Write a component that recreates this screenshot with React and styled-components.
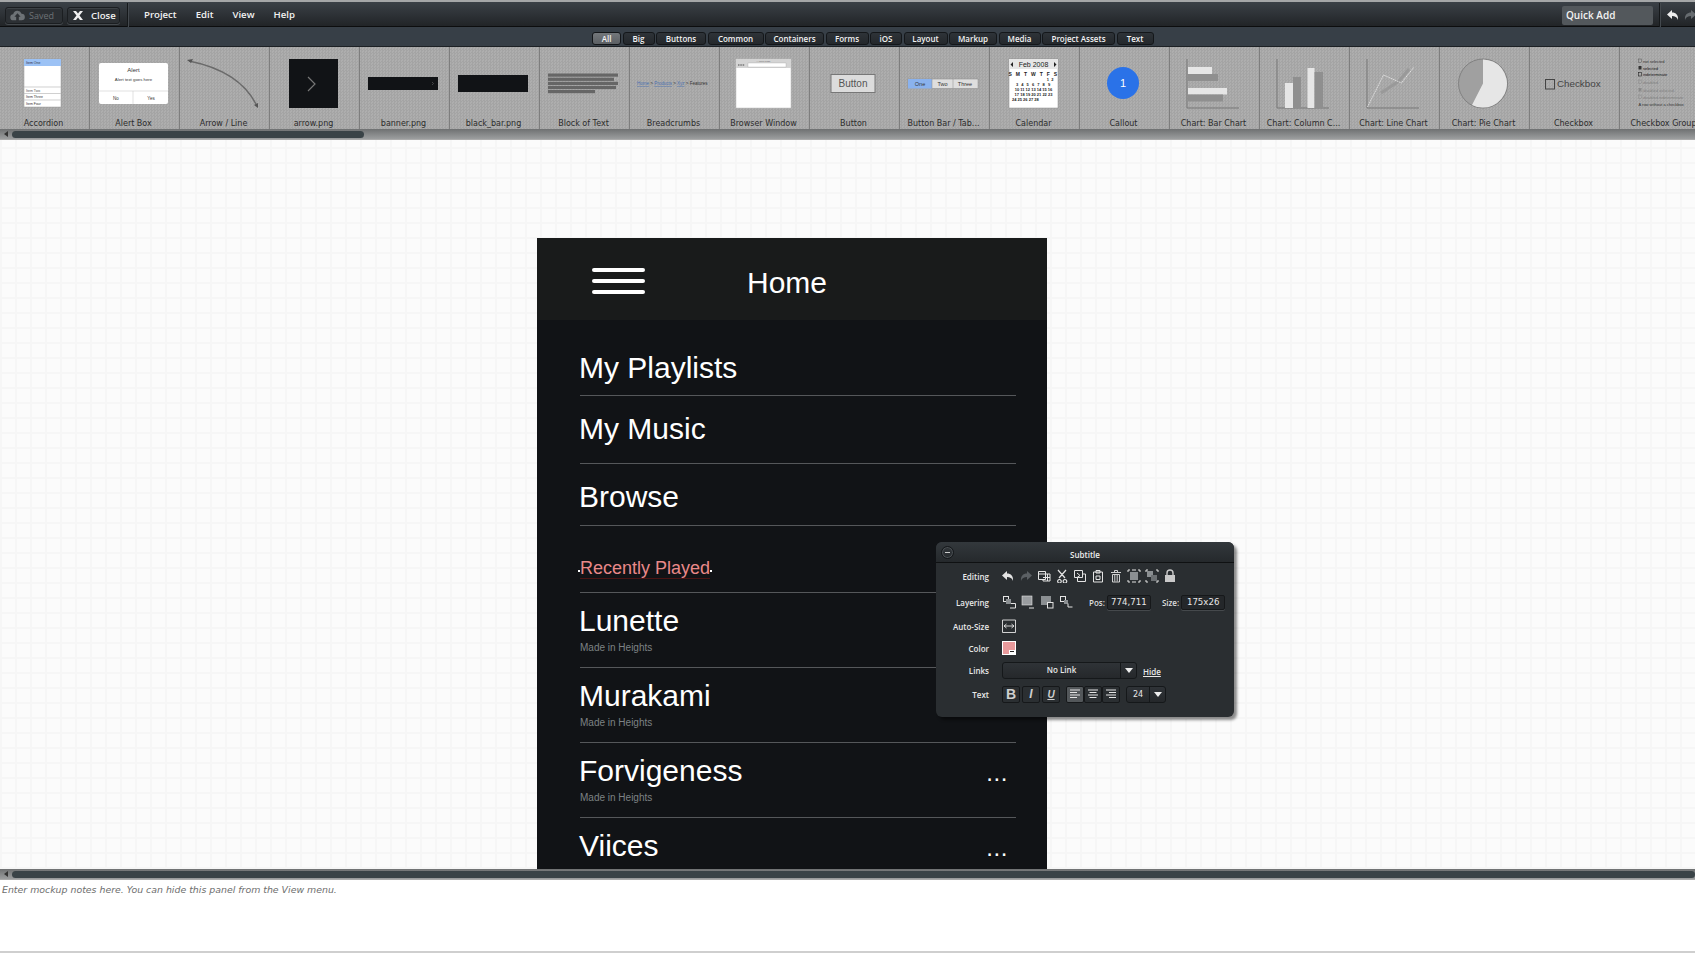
import React from "react";
import styled, { createGlobalStyle } from "styled-components";

const Global = createGlobalStyle`
  html, body { margin: 0; padding: 0; background: #fff; overflow: hidden; }
  * { box-sizing: border-box; }
`;

const UI = `"Open Sans", "Liberation Sans", sans-serif`;
const SANS = `"Liberation Sans", Arial, sans-serif`;
const DEJA = `"DejaVu Sans", sans-serif`;

const Shell = styled.div`
  width: 1695px; height: 953px; display: flex; flex-direction: column; overflow: hidden;
  font-family: ${UI};
`;
const TopBar = styled.header`
  height: 27px; flex: none; display: flex; align-items: center; padding: 2px 0 0 5px;
  background: linear-gradient(#3b4147, #212427);
  border-top: 2px solid #a5a7a8; border-bottom: 1px solid #0c0d0e;
  color: #eee;
`;
const BarButton = styled.button`
  width: ${p => p.$w}px; height: 17px; margin-right: 4px; padding: 0 0 0 4px; display: flex; align-items: center;
  gap: ${p => (p.$dim ? 4 : 7)}px;
  border: 1px solid #1b1e21; border-radius: 3px; background: #2c3034;
  box-shadow: inset 0 1px 0 #3d4246, 0 1px 0 #44494d;
  font: ${p => (p.$dim ? "400 9px" : "600 9.6px")} ${UI}; color: ${p => (p.$dim ? "#6d7276" : "#f0f0f0")};
`;
const BarDivider = styled.span`
  width: 1px; height: 24px; margin: 0 ${p => p.$after}px 0 ${p => p.$before}px; background: #44494e; box-shadow: -1px 0 0 #15181a;
`;
const Nav = styled.nav`
  display: flex; gap: 19px; font: 600 9.6px ${UI}; color: #f2f2f2; margin-top: -2px;
`;
const QuickAdd = styled.div`
  margin-left: auto; width: 91px; height: 19px; padding-left: 4px; display: flex; align-items: center;
  background: #53585c; border-radius: 2px; font: 600 10px ${UI}; color: #f2f2f2;
`;
const UndoPair = styled.div`
  display: flex; gap: 3px; margin-right: -2px; align-items: center;
`;
const FilterBar = styled.div`
  height: 20px; flex: none; display: flex; align-items: center; gap: 1.5px; padding: 3px 0 0 592px;
  background: #373f47; border-bottom: 1px solid #1d2125;
`;
const Tab = styled.div`
  width: ${p => p.$w}px; height: 13px; display: flex; align-items: center; justify-content: center;
  border: 1px solid #14171a; border-radius: 3px;
  background: ${p => (p.$active ? "linear-gradient(#73777b, #5c6064)" : "linear-gradient(#2e3338, #24282c)")};
  font: 600 8px ${UI}; color: #f2f2f2;
`;
const Library = styled.div`
  height: 82px; flex: none; display: flex; overflow: hidden;
  background-color: #a9a9a9;
  background-image: conic-gradient(#a4a4a4 25%, #aeaeae 0 50%, #a4a4a4 0 75%, #aeaeae 0);
  background-size: 3px 3px;
`;
const Item = styled.div`
  width: 90px; flex: none; display: flex; flex-direction: column; border-right: 1px solid #7e7e7e;
`;
const Thumb = styled.svg`
  width: 89px; height: 70px; display: block; font-family: ${SANS};
`;
const ItemLabel = styled.div`
  height: 11px; margin-top: 1px; padding-right: 2px; text-align: center; white-space: nowrap;
  font: 8px/12px ${DEJA}; color: #2c2c2c;
`;
const ScrollTrack = styled.div`
  height: ${p => p.$h}px; flex: none; display: flex; align-items: center; padding-left: 4px; gap: 4px;
  background: linear-gradient(#6f7172, #9c9e9f);
  border-bottom: 1px solid #aaa;
`;
const ScrollArrow = styled.span`
  width: 0; height: 0; border: 3px solid transparent; border-left: 0; border-right: 4px solid #333;
`;
const ScrollThumb = styled.span`
  width: ${p => p.$w}px; height: 7px; border-radius: 4px; background: #3a4347;
`;
const Canvas = styled.main`
  flex: 1; min-height: 0; position: relative; overflow: hidden; padding: 98px 0 0 537px;
  background-color: #fbfbfb;
  background-image:
    linear-gradient(90deg, #f6f6f6 2px, transparent 2px),
    linear-gradient(#f6f6f6 2px, transparent 2px);
  background-size: 15px 15px;
  background-position: 0 7px;
`;
const Phone = styled.section`
  width: 510px; height: 100%; overflow: hidden; background: #111316; color: #fff; font-family: ${SANS};
`;
const PhoneHeader = styled.div`
  height: 82px; display: flex; align-items: center; padding: 0 0 0 55px; background: #191b1b;
`;
const Burger = styled.div`
  width: 53px; display: flex; flex-direction: column; gap: 7px; margin-top: 4px;
`;
const BurgerLine = styled.span`
  display: block; height: 4px; border-radius: 2px; background: #fff;
`;
const PhoneTitle = styled.div`
  margin-left: 102px; font-size: 30px; line-height: 34px; margin-top: 7px;
`;
const List = styled.div`
  padding: 0 31px 0 43px;
`;
const Row = styled.div`
  height: ${p => p.$h}px; padding-top: ${p => p.$pt}px; display: flex; justify-content: space-between; align-items: flex-start;
  border-bottom: 1px solid #55575a;
`;
const RowTitle = styled.div`
  font-size: 30px; line-height: 34px; white-space: nowrap; margin-left: -1px;
`;
const RowSub = styled.div`
  margin-top: 4px; font-size: 10px; line-height: 12px; color: #7d8284;
`;
const Dots = styled.div`
  margin: 7px 8px 0 0; font-size: 24px; line-height: 24px; font-weight: 400; letter-spacing: 0.6px; color: #fff;
`;
const Selected = styled.div`
  position: relative; display: inline-block; font-size: 18px; line-height: 20px; color: #e98989;
  border-bottom: 1px solid #4a1414;
`;
const Handle = styled.span`
  position: absolute; top: 12px; ${p => p.$side}: -2px; width: 2px; height: 2px; background: #fff;
`;
const Inspector = styled.aside`
  position: absolute; left: 936px; top: 402px; width: 298px; height: 175px;
  background: #2a2e31; border-radius: 6px; color: #e6e6e6;
  box-shadow: 3px 3px 3px rgba(0,0,0,.45);
  font-family: ${UI};
`;
const InspectorTitle = styled.div`
  position: relative; height: 21px; display: flex; align-items: center; justify-content: center;
  border-bottom: 1px solid #0f1112;
  background: linear-gradient(#33383c, #25292c); border-radius: 6px 6px 0 0;
  font: 600 8px ${UI}; color: #eee; padding-top: 4px;
`;
const Collapse = styled.span`
  position: absolute; left: 5px; top: 4px; width: 13px; height: 13px; border-radius: 50%;
  border: 1px solid #14171a; box-shadow: 0 0 0 1px #4a4f53 inset;
  display: flex; align-items: center; justify-content: center;
  &::after { content: ""; width: 5px; height: 1px; background: #ccc; }
`;
const PropRow = styled.div`
  height: ${p => p.$h}px; display: flex; align-items: center;
`;
const PropLabel = styled.div`
  width: 53px; margin-right: 13px; text-align: right; font: 600 8px ${UI}; color: #e8e8e8; white-space: nowrap;
`;
const IconStrip = styled.div`
  display: flex; gap: ${p => p.$gap}px; margin-left: ${p => p.$ml}px;
`;
const Tool = styled.svg`
  width: 14px; height: 14px; display: block; flex: none;
`;
const SmallLabel = styled.span`
  margin-left: ${p => p.$ml}px; margin-right: 2px; font: 600 8px ${UI}; color: #ddd;
`;
const Field = styled.div`
  width: 44px; height: 15px; display: flex; align-items: center; justify-content: center;
  background: #24272a; border: 1px solid #16181a; border-radius: 2px; box-shadow: 0 1px 0 #45494c;
  font: 8.6px ${DEJA}; color: #e8e8e8;
`;
const Swatch = styled.div`
  position: relative; width: 14px; height: 14px; background: #e99a9c; border: 1px solid #fff;
  &::after {
    content: ""; position: absolute; right: 0; bottom: 0; width: 6px; height: 4px; background: #fff;
    background-image: linear-gradient(#222, #222); background-size: 4px 1px; background-position: 1px 1px; background-repeat: no-repeat;
  }
`;
const Select = styled.div`
  width: ${p => p.$w}px; height: 17px; display: flex; background: linear-gradient(#2f3337, #25282b);
  border: 1px solid #15181a; border-radius: 3px; font: 600 8px ${UI}; color: #e8e8e8;
`;
const SelectValue = styled.div`
  flex: 1; display: flex; align-items: center; justify-content: center; padding-bottom: ${p => p.$pb}px;
  font-family: ${p => (p.$mono ? DEJA : UI)}; font-weight: ${p => (p.$mono ? 400 : 600)};
`;
const Caret = styled.div`
  width: ${p => p.$w}px; border-left: 1px solid #15181a; display: flex; align-items: center; justify-content: center;
  &::after { content: ""; border: 4px solid transparent; border-top: 5px solid #eee; border-bottom: 0; }
`;
const HideLink = styled.a`
  margin-left: 6px; margin-top: 3px; font: 600 8px ${UI}; color: #e8e8e8; text-decoration: underline;
`;
const FormatButton = styled.div`
  width: ${p => p.$w || 18}px; height: 17px; display: flex; align-items: center; justify-content: center;
  background: ${p => (p.$on ? "#53575a" : "#2b2f32")}; border: 1px solid #16181a; border-radius: 2px;
  margin-right: ${p => p.$mr || 0}px; color: #cfcfcf;
`;
const FormatGlyph = styled.span`
  font: ${p => (p.$italic ? "italic" : "normal")} 700 ${p => p.$size}px ${SANS};
  text-decoration: ${p => (p.$under ? "underline" : "none")}; color: #cfcfcf;
`;
const ButtonGroup = styled.div`
  display: flex; margin: 0 6px;
`;
const Notes = styled.footer`
  flex: none; height: 73px; padding: 3px 0 0 2px; background: #fff; border-bottom: 2px solid #cfcfcf;
  font: italic 9.4px/14px ${DEJA}; color: #6e6e6e;
`;

const thumbs = {
  accordion: <>
    <rect x="25" y="12" width="37" height="48" fill="#fff" stroke="#999" strokeWidth=".5" />
    <rect x="25" y="12" width="37" height="7" fill="#9cc2f5" />
    <text x="27" y="17" fontSize="3.5" fill="#334">Item One</text>
    <path d="M25 40h37M25 46.500h37M25 53h37" stroke="#bbb" strokeWidth=".7" />
    <text x="27" y="44.500" fontSize="3.500" fill="#555">Item Two</text>
    <text x="27" y="51" fontSize="3.500" fill="#333">Item Three</text>
    <text x="27" y="58" fontSize="3.500" fill="#333">Item Four</text>
  </>,
  alert: <>
    <rect x="10" y="16" width="69" height="41" rx="2" fill="#fff" />
    <text x="44.500" y="25" fontSize="6" fill="#333" textAnchor="middle">Alert</text>
    <text x="44.500" y="34" fontSize="4.300" fill="#333" textAnchor="middle">Alert text goes here</text>
    <path d="M10 44h69M44 44v13" stroke="#ccc" strokeWidth=".6" />
    <text x="27" y="52.500" fontSize="4.500" fill="#333" textAnchor="middle">No</text>
    <text x="62" y="52.500" fontSize="4.500" fill="#333" textAnchor="middle">Yes</text>
  </>,
  arrow: <>
    <path d="M10 14C40 20 66 34 78 59" fill="none" stroke="#6a6a6a" strokeWidth="1.300" />
    <path d="M8 13l6-1-2 4zM79 61l-4-3 4-2z" fill="#555" />
  </>,
  arrowPng: <>
    <rect x="20" y="12" width="49" height="49" fill="#111316" />
    <path d="M39 30l7 7-7 7" fill="none" stroke="#777" strokeWidth="1.200" />
  </>,
  banner: <>
    <rect x="9" y="30" width="70" height="13" fill="#111316" />
    <path d="M73 35l1.500 1.500-1.500 1.500" fill="none" stroke="#666" strokeWidth=".6" />
  </>,
  bar: <rect x="9" y="28" width="70" height="17" fill="#111316" />,
  block: <>
    <rect x="9" y="26.500" width="70" height="3.200" fill="#666" />
    <rect x="9" y="30.700" width="66" height="3.200" fill="#666" />
    <rect x="9" y="34.800" width="70" height="3.200" fill="#666" />
    <rect x="9" y="38.900" width="68" height="3.200" fill="#666" />
    <rect x="9" y="43" width="47" height="3.200" fill="#666" />
  </>,
  crumbs: <text x="8" y="38" fontSize="4.500" fill="#333"><tspan fill="#4a70b0" textDecoration="underline">Home</tspan> &gt; <tspan fill="#4a70b0" textDecoration="underline">Products</tspan> &gt; <tspan fill="#4a70b0" textDecoration="underline">Xyz</tspan> &gt; Features</text>,
  browser: <>
    <rect x="17" y="12" width="55" height="49" fill="#fff" stroke="#bbb" strokeWidth=".5" />
    <rect x="17" y="12" width="55" height="9" fill="#d4d4d4" />
    <text x="44.500" y="15" fontSize="2.500" fill="#666" textAnchor="middle">A Web Page</text>
    <rect x="29" y="16" width="38" height="4" fill="#fff" stroke="#999" strokeWidth=".3" />
    <path d="M19 18h7" stroke="#777" strokeWidth="1.500" strokeDasharray="1.500 .8" />
  </>,
  button: <>
    <rect x="22" y="27.500" width="44" height="18" fill="#dcdcdc" stroke="#777" strokeWidth="1" />
    <text x="44" y="40" fontSize="10" fill="#555" textAnchor="middle">Button</text>
  </>,
  buttonBar: <>
    <rect x="9" y="32" width="70" height="9.500" fill="#dedede" stroke="#888" strokeWidth=".5" />
    <rect x="9" y="32" width="24" height="9.500" fill="#8ab2ee" />
    <path d="M33 32v9.500M54 32v9.500" stroke="#888" strokeWidth=".5" />
    <text x="21" y="39" fontSize="5.500" fill="#333" textAnchor="middle">One</text>
    <text x="43.500" y="39" fontSize="5.500" fill="#333" textAnchor="middle">Two</text>
    <text x="66" y="39" fontSize="5.500" fill="#333" textAnchor="middle">Three</text>
  </>,
  calendar: <>
    <rect x="20" y="12" width="49" height="49" fill="#fff" stroke="#888" strokeWidth=".5" />
    <rect x="20" y="12" width="49" height="10" fill="#e6e6e6" />
    <text x="44.500" y="20" fontSize="7" fill="#222" textAnchor="middle">Feb 2008</text>
    <path d="M24 15v5l-2.500-2.500zM65 15v5l2.500-2.500z" fill="#222" />
    <text x="44.500" y="29" fontSize="5" fontWeight="700" fill="#222" textAnchor="middle" letterSpacing="1.300">S M T W T F S</text>
    <text x="65" y="34" fontSize="4" fontWeight="700" fill="#222" textAnchor="end" letterSpacing=".6">1 2</text>
    <text x="44.500" y="39" fontSize="4" fontWeight="700" fill="#222" textAnchor="middle" letterSpacing="1">3 4 5 6 7 8 9</text>
    <text x="44.500" y="44" fontSize="4" fontWeight="700" fill="#222" textAnchor="middle">10 11 12 13 14 15 16</text>
    <text x="44.500" y="49" fontSize="4" fontWeight="700" fill="#222" textAnchor="middle">17 18 19 20 21 22 23</text>
    <text x="23" y="54" fontSize="4" fontWeight="700" fill="#222">24 25 26 27 28</text>
  </>,
  callout: <>
    <circle cx="44" cy="36" r="16" fill="#2a72e8" />
    <text x="44" y="40" fontSize="11" fontWeight="400" fill="#fff" textAnchor="middle">1</text>
  </>,
  barChart: <>
    <path d="M18 12v49h52" fill="none" stroke="#777" strokeWidth="1" />
    <rect x="19" y="20" width="24" height="7" fill="#e6e6e6" />
    <rect x="19" y="27" width="30" height="7" fill="#8f8f8f" />
    <rect x="19" y="41" width="39" height="6.500" fill="#e6e6e6" />
    <rect x="19" y="47.500" width="35" height="7" fill="#8f8f8f" />
  </>,
  columnChart: <>
    <path d="M18 12v49h52" fill="none" stroke="#777" strokeWidth="1" />
    <rect x="26" y="36" width="8" height="25" fill="#e6e6e6" />
    <rect x="34" y="30" width="8" height="31" fill="#8f8f8f" />
    <rect x="48.500" y="21" width="7" height="40" fill="#e6e6e6" />
    <rect x="55.500" y="25" width="8.500" height="36" fill="#8f8f8f" />
  </>,
  lineChart: <>
    <path d="M18 12v49h52" fill="none" stroke="#777" strokeWidth="1" />
    <path d="M32 46l18-12 10-12" fill="none" stroke="#999" strokeWidth="3" />
    <path d="M18.500 60l16-32 18 8 12.500-16" fill="none" stroke="#eee" strokeWidth=".8" strokeDasharray="1.500 .6" />
  </>,
  pie: <>
    <circle cx="44" cy="36.500" r="24.500" fill="#a0a0a0" stroke="#777" strokeWidth=".8" />
    <path d="M44 12.400A24.100 24.100 0 1 1 33 58L44 36.500Z" fill="#e6e6e6" />
  </>,
  checkbox: <>
    <rect x="16.500" y="32.500" width="9" height="9.500" fill="none" stroke="#444" strokeWidth="1" />
    <text x="28" y="40" fontSize="9.800" fill="#444">Checkbox</text>
  </>,
  group: <>
    <g fontSize="4" fill="#333">
      <rect x="19.500" y="12" width="3" height="3.500" fill="none" stroke="#444" strokeWidth=".4" />
      <text x="24" y="15.500">not selected</text>
      <rect x="19.500" y="19" width="3" height="3.500" fill="#333" />
      <text x="24" y="22.500" fill="#111">selected</text>
      <rect x="19.500" y="25.500" width="3" height="3.500" fill="none" stroke="#222" strokeWidth=".6" />
      <text x="24" y="29" fill="#111">indeterminate</text>
      <g opacity=".35">
        <rect x="19.500" y="33" width="3" height="3.500" fill="none" stroke="#444" strokeWidth=".4" />
        <text x="24" y="36.500">disabled</text>
        <rect x="19.500" y="41" width="3" height="3.500" fill="#555" />
        <text x="24" y="44.500">disabled selected</text>
        <rect x="19.500" y="48" width="3" height="3.500" fill="none" stroke="#444" strokeWidth=".4" />
        <text x="24" y="51.500">disabled indeterminate</text>
      </g>
      <text x="19.500" y="58.500">A row without a checkbox</text>
    </g>
  </>,
};

const items = [
  ["Accordion", "accordion"], ["Alert Box", "alert"], ["Arrow / Line", "arrow"], ["arrow.png", "arrowPng"],
  ["banner.png", "banner"], ["black_bar.png", "bar"], ["Block of Text", "block"], ["Breadcrumbs", "crumbs"],
  ["Browser Window", "browser"], ["Button", "button"], ["Button Bar / Tab...", "buttonBar"], ["Calendar", "calendar"],
  ["Callout", "callout"], ["Chart: Bar Chart", "barChart"], ["Chart: Column C...", "columnChart"],
  ["Chart: Line Chart", "lineChart"], ["Chart: Pie Chart", "pie"], ["Checkbox", "checkbox"], ["Checkbox Group", "group"],
];

const tabs = [
  ["All", 29, true], ["Big", 32], ["Buttons", 50], ["Common", 56], ["Containers", 59], ["Forms", 43],
  ["iOS", 32], ["Layout", 44], ["Markup", 48], ["Media", 42], ["Project Assets", 73], ["Text", 37],
];

const tracks = [
  { title: "Lunette", sub: "Made in Heights" },
  { title: "Murakami", sub: "Made in Heights" },
  { title: "Forvigeness", sub: "Made in Heights" },
  { title: "Viices" },
];

const W = "#e4e4e4";
const UndoPath = "M6 2L1 6.500 6 11V8c3 0 5 1 6 4 .5-5-2-7.500-6-7.500z";
const editing = [
  <path key="a" d={UndoPath} fill={W} />,
  <path key="b" d={UndoPath} fill="#5b6064" transform="matrix(-1 0 0 1 14 0)" />,
  <path key="c" d="M1.500 2.500h7v8h-7zM8.500 5h4.500v7h-7v-1.500M1.500 5h7M10.500 5v7M6 8.500h7" fill="none" stroke={W} strokeWidth="1" />,
  <path key="d" d="M3 1l7 8M11 1L4 9M4.500 10.500a1.800 1.800 0 1 1-.1 0zM10 10.500a1.800 1.800 0 1 1-.1 0z" fill="none" stroke={W} strokeWidth="1.200" />,
  <path key="e" d="M1.500 1.500h8v7h-8zM9.500 5h3v7.500h-8V8.500M4 4l3 2.500-3 2" fill="none" stroke={W} strokeWidth="1" />,
  <path key="f" d="M2.500 3h9v10h-9zM5 1.500h4V4H5zM5 7h4v3.500H5z" fill="none" stroke={W} strokeWidth="1" />,
  <path key="g" d="M2 3.500h10M5.500 3V1.500h3V3M3.500 5.500h7v7.500h-7zM5.800 6v6.500M8.200 6v6.500" fill="none" stroke={W} strokeWidth=".9" />,
  <g key="h"><rect x="3" y="3" width="8" height="8" fill="#8b8f92" /><path d="M1 1h2M1 1v2M11 1h2M13 1v2M1 13h2M1 11v2M11 13h2M13 11v2M5 1h4M5 13h4" fill="none" stroke={W} strokeWidth="1" /></g>,
  <g key="i"><rect x="2" y="2" width="6" height="6" fill="#8b8f92" /><rect x="6" y="6" width="6" height="6" fill="#6c7073" /><path d="M1 1h2M1 1v2M11 1h2M13 1v2M1 13h2M1 11v2M11 13h2M13 11v2" fill="none" stroke={W} strokeWidth="1" /></g>,
  <g key="j"><rect x="2" y="6" width="10" height="7" fill="#c9c9c9" /><path d="M4 6V4a3 3 0 0 1 6 0v2" fill="none" stroke="#c9c9c9" strokeWidth="1.400" /></g>,
];
const layering = [
  <g key="a"><rect x="1.500" y="1.500" width="5" height="5" fill="none" stroke={W} /><rect x="4" y="4" width="5" height="5" fill="#8b8f92" /><path d="M9 8.500h4.500v4.500H8" fill="none" stroke={W} /></g>,
  <g key="b"><rect x="1" y="1" width="10" height="9" fill="#9a9da0" stroke={W} strokeWidth=".6" /><path d="M8 13h5" stroke={W} /></g>,
  <g key="c"><rect x="1" y="1" width="10" height="9" fill="#8b8f92" /><rect x="7.500" y="7.500" width="5.500" height="5.500" fill="#2a2e31" stroke={W} /></g>,
  <g key="d"><rect x="1.500" y="1.500" width="5" height="5" fill="none" stroke={W} /><rect x="5" y="5" width="4" height="4" fill="#8b8f92" /><path d="M9 8.500v3.500h4.500" fill="none" stroke={W} /></g>,
];
const AlignIcon = ({ lines }) => (
  <Tool viewBox="0 0 14 14">
    <path d={lines} fill="none" stroke={W} strokeWidth="1" />
  </Tool>
);

export default function App() {
  return (
    <Shell>
      <Global />
      <TopBar>
        <BarButton $w={58} $dim>
          <svg width="15" height="13" viewBox="0 0 17 13"><path d="M4 12a3.500 3.500 0 0 1-.4-7 5 5 0 0 1 9.500-.6A3.800 3.800 0 0 1 13 12h-3V8h2L8.500 4 5 8h2v4z" fill="#6d7276" /></svg>
          Saved
        </BarButton>
        <BarButton $w={53}>
          <svg width="12" height="11" viewBox="0 0 12 11"><path d="M1 1h3l2 2.500L8 1h3L7.500 5.500 11 10H8L6 7.500 4 10H1l3.500-4.500z" fill="#f0f0f0" /></svg>
          Close
        </BarButton>
        <BarDivider $before={4} $after={15} />
        <Nav>
          <span>Project</span><span>Edit</span><span>View</span><span>Help</span>
        </Nav>
        <QuickAdd>Quick Add</QuickAdd>
        <BarDivider $before={7} $after={5} />
        <UndoPair>
          <Tool viewBox="0 0 14 14"><path d={UndoPath} fill="#eee" /></Tool>
          <Tool viewBox="0 0 14 14"><path d={UndoPath} fill="#666b6f" transform="matrix(-1 0 0 1 14 0)" /></Tool>
        </UndoPair>
      </TopBar>
      <FilterBar>
        {tabs.map(([t, w, a]) => <Tab key={t} $w={w} $active={a}>{t}</Tab>)}
      </FilterBar>
      <Library>
        {items.map(([label, key]) => (
          <Item key={label}>
            <Thumb viewBox="1 0 89 70">{thumbs[key]}</Thumb>
            <ItemLabel>{label}</ItemLabel>
          </Item>
        ))}
      </Library>
      <ScrollTrack $h={11}><ScrollArrow /><ScrollThumb $w={352} /></ScrollTrack>
      <Canvas>
        <Phone>
          <PhoneHeader>
            <Burger><BurgerLine /><BurgerLine /><BurgerLine /></Burger>
            <PhoneTitle>Home</PhoneTitle>
          </PhoneHeader>
          <List>
            <Row $h={76} $pt={31}><RowTitle>My Playlists</RowTitle></Row>
            <Row $h={68} $pt={16}><RowTitle>My Music</RowTitle></Row>
            <Row $h={62} $pt={16}><RowTitle>Browse</RowTitle></Row>
            <Row $h={67} $pt={32}>
              <Selected><Handle $side="left" />Recently Played<Handle $side="right" /></Selected>
            </Row>
            {tracks.map(t => (
              <Row key={t.title} $h={75} $pt={11}>
                <div>
                  <RowTitle>{t.title}</RowTitle>
                  {t.sub && <RowSub>{t.sub}</RowSub>}
                </div>
                <Dots>...</Dots>
              </Row>
            ))}
          </List>
        </Phone>
        <Inspector>
          <InspectorTitle><Collapse />Subtitle</InspectorTitle>
          <PropRow $h={26}>
            <PropLabel>Editing</PropLabel>
            <IconStrip $gap={4} $ml={-1}>{editing.map((e, i) => <Tool key={i} viewBox="0 0 14 14">{e}</Tool>)}</IconStrip>
          </PropRow>
          <PropRow $h={26}>
            <PropLabel>Layering</PropLabel>
            <IconStrip $gap={5} $ml={0}>{layering.map((e, i) => <Tool key={i} viewBox="0 0 14 14">{e}</Tool>)}</IconStrip>
            <SmallLabel $ml={16}>Pos:</SmallLabel>
            <Field>774,711</Field>
            <SmallLabel $ml={11}>Size:</SmallLabel>
            <Field>175x26</Field>
          </PropRow>
          <PropRow $h={22}>
            <PropLabel>Auto-Size</PropLabel>
            <Tool viewBox="0 0 14 14"><path d="M.5 1v12.500h13V1M.5 1h13M2 7h10M4.500 5L2 7l2.500 2M9.500 5L12 7l-2.500 2" fill="none" stroke={W} strokeWidth=".9" /></Tool>
          </PropRow>
          <PropRow $h={22}>
            <PropLabel>Color</PropLabel>
            <Swatch />
          </PropRow>
          <PropRow $h={22}>
            <PropLabel>Links</PropLabel>
            <Select $w={135}><SelectValue $pb={2}>No Link</SelectValue><Caret $w={16} /></Select>
            <HideLink>Hide</HideLink>
          </PropRow>
          <PropRow $h={26}>
            <PropLabel>Text</PropLabel>
            <FormatButton $mr={2}><FormatGlyph $size={14}>B</FormatGlyph></FormatButton>
            <FormatButton $mr={2}><FormatGlyph $size={12} $italic>I</FormatGlyph></FormatButton>
            <FormatButton><FormatGlyph $size={10} $italic $under>U</FormatGlyph></FormatButton>
            <ButtonGroup>
              <FormatButton $on><AlignIcon lines="M2 3h10M2 5.500h7M2 8h10M2 10.500h7" /></FormatButton>
              <FormatButton><AlignIcon lines="M2 3h10M3.500 5.500h7M2 8h10M3.500 10.500h7" /></FormatButton>
              <FormatButton><AlignIcon lines="M2 3h10M5 5.500h7M2 8h10M5 10.500h7" /></FormatButton>
            </ButtonGroup>
            <Select $w={40}><SelectValue $mono>24</SelectValue><Caret $w={16} /></Select>
          </PropRow>
        </Inspector>
      </Canvas>
      <ScrollTrack $h={11}><ScrollArrow /><ScrollThumb $w={1683} /></ScrollTrack>
      <Notes>Enter mockup notes here. You can hide this panel from the View menu.</Notes>
    </Shell>
  );
}
